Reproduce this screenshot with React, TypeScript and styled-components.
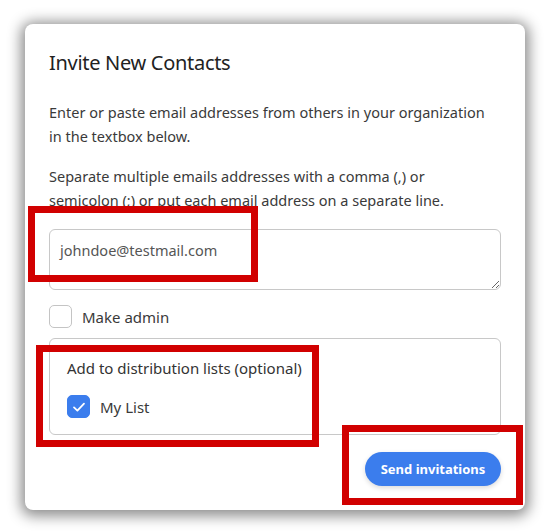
import styled, { createGlobalStyle } from "styled-components";

const GlobalStyle = createGlobalStyle`
    html, body {
        margin: 0;
        padding: 0;
        background: #ffffff;
    }
    body {
        font-family: "Noto Sans", "Open Sans", Arial, sans-serif;
        color: #333333;
    }
`;

const App = () => {
    return (
        <>
            <GlobalStyle />
            <Page>
                <Card>
                    <Title>Invite New Contacts</Title>
                    <Text>
                        Enter or paste email addresses from others in your organization
                        in the textbox below.
                    </Text>
                    <Text>
                        Separate multiple emails addresses with a comma (,) or
                        semicolon (;) or put each email address on a separate line.
                    </Text>
                    <EmailBox defaultValue="johndoe@testmail.com" />
                    <CheckRow>
                        <CheckBox />
                        <CheckLabel>Make admin</CheckLabel>
                    </CheckRow>
                    <ListBox>
                        <ListTitle>Add to distribution lists (optional)</ListTitle>
                        <CheckRow>
                            <CheckBox checked>
                                <svg width="16" height="16" viewBox="0 0 16 16" fill="none">
                                    <path
                                        d="M3 8.4 L6.4 11.6 L13 4.6"
                                        stroke="#ffffff"
                                        strokeWidth="1.8"
                                        strokeLinecap="round"
                                        strokeLinejoin="round"
                                    />
                                </svg>
                            </CheckBox>
                            <CheckLabel>My List</CheckLabel>
                        </CheckRow>
                    </ListBox>
                    <Footer>
                        <SendBtn>Send invitations</SendBtn>
                    </Footer>

                    <Mark $left={3} $top={182} $width={230} $height={76} />
                    <Mark $left={11} $top={321} $width={283} $height={102} />
                    <Mark $left={317} $top={401} $width={181} $height={80} />
                </Card>
            </Page>
        </>
    );
};

export default App;

const Page = styled.div`
    padding: 24px 25px;
`;

const Card = styled.div`
    position: relative;
    box-sizing: border-box;
    width: 500px;
    height: 486px;
    padding: 25px 24px 0 24px;
    background: #ffffff;
    border-radius: 8px;
    box-shadow: 0 2px 14px 4px rgba(0, 0, 0, 0.45);
    display: flex;
    flex-direction: column;
`;

const Title = styled.h2`
    margin: 0 0 23px 0;
    font-size: 20px;
    font-weight: 400;
    line-height: 28px;
    color: #222222;
    letter-spacing: -0.3px;
`;

const Text = styled.p`
    max-width: 440px;
    margin: 0 0 16px 0;
    font-size: 14.5px;
    line-height: 24px;
    color: #3a3a3a;
`;

const EmailBox = styled.textarea`
    box-sizing: border-box;
    width: 452px;
    height: 61px;
    margin-top: 1px;
    padding: 9px 10px;
    border: 1px solid #c8c8c8;
    border-radius: 6px;
    font-family: "Noto Sans", "Open Sans", Arial, sans-serif;
    font-size: 14.5px;
    line-height: 22px;
    color: #555555;
    resize: vertical;
    outline: none;
`;

const CheckRow = styled.div`
    display: flex;
    align-items: center;
    gap: 10px;
    margin-top: 15px;
`;

const CheckBox = styled.span<{ checked?: boolean }>`
    box-sizing: border-box;
    display: flex;
    align-items: center;
    justify-content: center;
    width: 23px;
    height: 23px;
    border-radius: 5px;
    border: 1px solid ${(p) => (p.checked ? "#3b7ded" : "#c4c4c4")};
    background: ${(p) => (p.checked ? "#3b7ded" : "#ffffff")};
`;

const CheckLabel = styled.span`
    font-size: 15px;
    color: #3a3a3a;
`;

const ListBox = styled.div`
    box-sizing: border-box;
    width: 452px;
    height: 97px;
    margin-top: 10px;
    padding: 17px 17px 0 17px;
    border: 1px solid #c8c8c8;
    border-radius: 6px;

    ${CheckRow} {
        margin-top: 15px;
    }
`;

const ListTitle = styled.div`
    font-size: 15px;
    line-height: 24px;
    color: #333333;
`;

const Footer = styled.div`
    display: flex;
    justify-content: flex-end;
    margin-top: 17px;
`;

const SendBtn = styled.button`
    all: unset;
    box-sizing: border-box;
    width: 136px;
    height: 34px;
    border-radius: 17px;
    background: #3b7ded;
    color: #ffffff;
    font-family: "Noto Sans", "Open Sans", Arial, sans-serif;
    font-size: 13px;
    font-weight: 700;
    text-align: center;
    line-height: 34px;
    box-shadow: 0 2px 5px rgba(0, 0, 0, 0.15);
    cursor: pointer;
`;

const Mark = styled.div<{ $left: number; $top: number; $width: number; $height: number }>`
    position: absolute;
    left: ${(p) => p.$left}px;
    top: ${(p) => p.$top}px;
    width: ${(p) => p.$width}px;
    height: ${(p) => p.$height}px;
    box-sizing: border-box;
    border: 7px solid #d10000;
    pointer-events: none;
`;
